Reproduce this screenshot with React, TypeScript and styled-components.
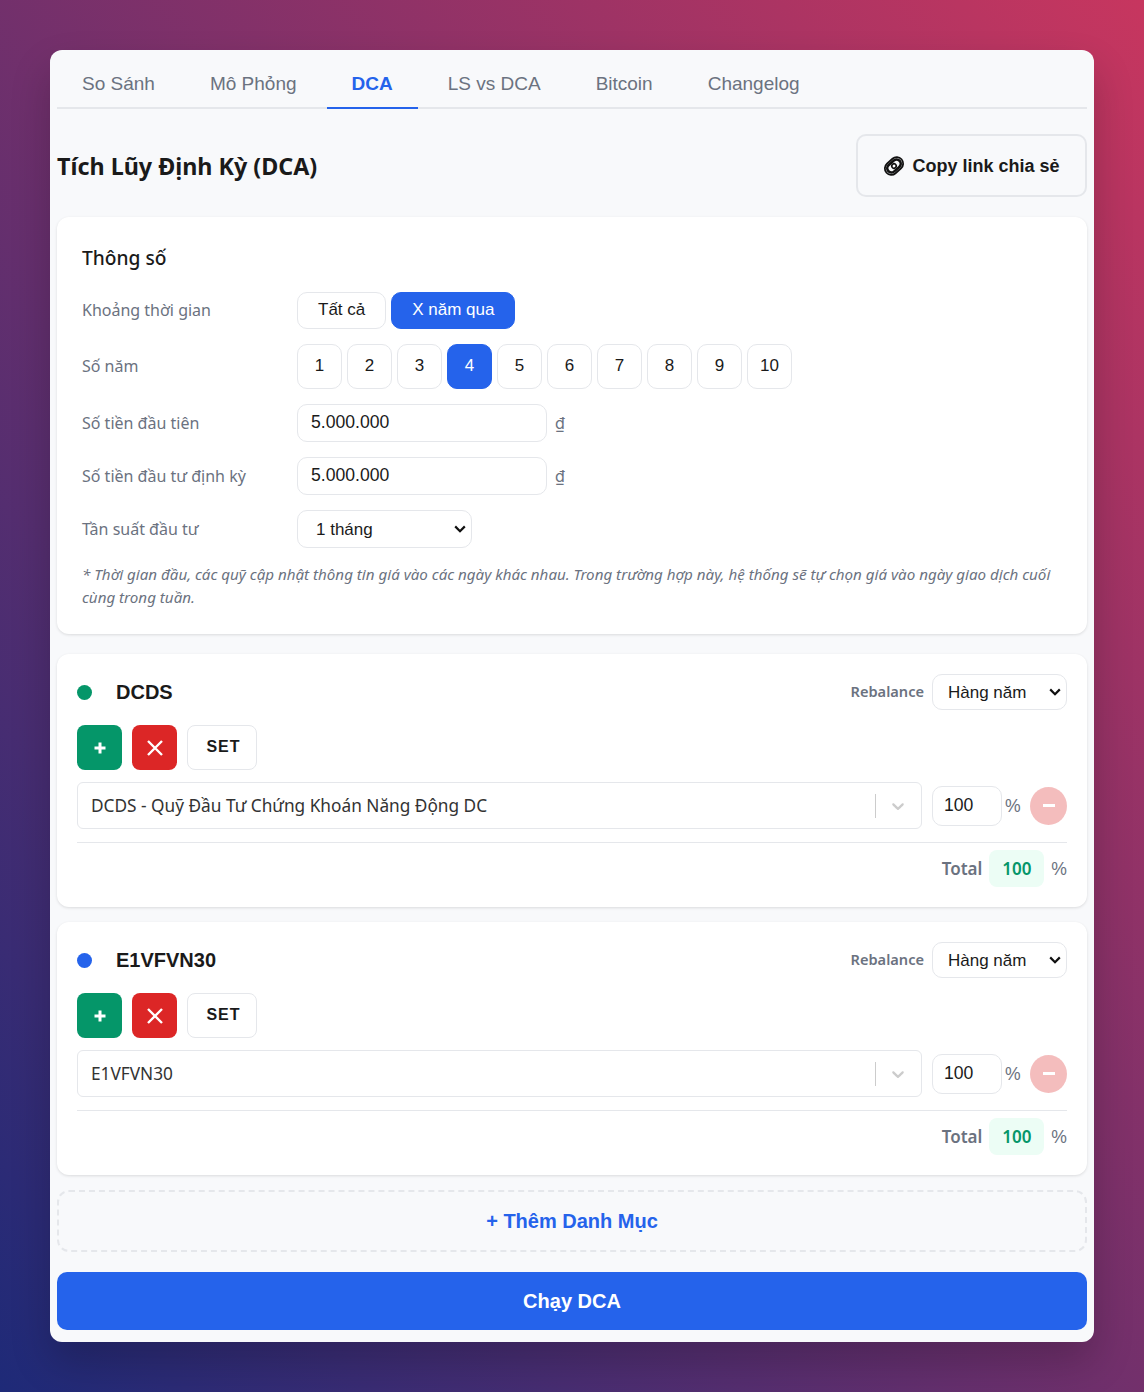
import React from "react";
import styled, { createGlobalStyle } from "styled-components";

const sans = `"Liberation Sans", Arial, sans-serif`;
const humanist = `"Noto Sans", "Open Sans", sans-serif`;

const selectArrow = `url("data:image/svg+xml,%3Csvg xmlns='http://www.w3.org/2000/svg' width='12' height='8' viewBox='0 0 12 8'%3E%3Cpath d='M1.2 1.4L6 6.2l4.8-4.8' fill='none' stroke='%23111' stroke-width='2.2'/%3E%3C/svg%3E")`;

const GlobalStyle = createGlobalStyle`
  html, body {
    margin: 0;
    padding: 0;
  }
  body {
    min-height: 1392px;
    font-family: ${sans};
    color: #1a1a1a;
    background: linear-gradient(to top right, #1e2a78 0%, #c7365f 100%);
  }
  * {
    box-sizing: border-box;
  }
`;

const Page = styled.div`
  padding: 50px;
`;

const Panel = styled.div`
  background: #f8f9fb;
  border-radius: 12px;
  padding: 0 7px 12px;
  height: 1292px;
  box-shadow: 0 20px 40px rgba(0, 0, 0, 0.2);
`;

const Tabs = styled.div`
  display: flex;
  gap: 5px;
  height: 59px;
  border-bottom: 2px solid #e5e7eb;
`;

const Tab = styled.div<{ $active?: boolean }>`
  padding: 0 25px;
  height: 59px;
  line-height: 67px;
  font-size: 19px;
  font-weight: ${(p) => (p.$active ? 700 : 400)};
  color: ${(p) => (p.$active ? "#2563eb" : "#6b7280")};
  border-bottom: 2px solid ${(p) => (p.$active ? "#2563eb" : "transparent")};
`;

const Header = styled.div`
  display: flex;
  align-items: center;
  justify-content: space-between;
  margin-top: 25px;
  height: 63px;
`;

const Title = styled.h2`
  margin: 0;
  font-family: ${humanist};
  font-size: 23.3px;
  font-weight: 700;
`;

const ShareButton = styled.button`
  display: flex;
  align-items: center;
  gap: 7px;
  justify-content: center;
  width: 231px;
  height: 63px;
  padding: 1px 0 0;
  background: transparent;
  border: 2px solid #e5e7eb;
  border-radius: 10px;
  font-family: ${sans};
  font-size: 18px;
  font-weight: 700;
  color: #1a1a1a;
`;

const Card = styled.section`
  background: #fff;
  border-radius: 12px;
  box-shadow: 0 1px 3px rgba(0, 0, 0, 0.12);
`;

const ParamCard = styled(Card)`
  margin-top: 20px;
  height: 417px;
  padding: 25px;
`;

const CardTitle = styled.h3`
  margin: 0;
  height: 50px;
  padding-top: 2px;
  font-family: ${humanist};
  font-size: 19.2px;
  line-height: 28px;
  font-weight: 500;
`;

const Rows = styled.div`
  display: flex;
  flex-direction: column;
  gap: 15px;
`;

const Row = styled.div`
  display: flex;
  align-items: center;
`;

const Label = styled.div`
  width: 215px;
  padding-bottom: 1px;
  font-family: ${humanist};
  font-size: 16px;
  color: #6b7280;
`;

const Options = styled.div`
  display: flex;
  gap: 5px;
`;

const Pill = styled.button<{ $active?: boolean; $square?: boolean }>`
  height: ${(p) => (p.$square ? 45 : 37)}px;
  width: ${(p) => (p.$square ? "45px" : "auto")};
  padding: ${(p) => (p.$square ? 0 : "0 20px")};
  padding-bottom: 2px;
  border: 1px solid ${(p) => (p.$active ? "#2563eb" : "#e5e7eb")};
  border-radius: 10px;
  background: ${(p) => (p.$active ? "#2563eb" : "#fff")};
  color: ${(p) => (p.$active ? "#fff" : "#1a1a1a")};
  font-family: ${sans};
  font-size: 17px;
`;

const Amount = styled.input`
  width: 250px;
  height: 38px;
  padding: 0 13px 2px;
  border: 1px solid #e5e7eb;
  border-radius: 10px;
  background: #fff;
  color: #1a1a1a;
  font-family: ${sans};
  font-size: 17.6px;
`;

const Unit = styled.span`
  margin-left: 8px;
  color: #6b7280;
  font-family: Inter, sans-serif;
  font-size: 16px;
`;

const Select = styled.select<{ $width: number; $height: number; $pad: number }>`
  appearance: none;
  width: ${(p) => p.$width}px;
  height: ${(p) => p.$height}px;
  padding: 0 20px 0 ${(p) => p.$pad}px;
  border: 1px solid #e5e7eb;
  border-radius: 10px;
  background: #fff ${selectArrow} no-repeat right 5px center;
  color: #1a1a1a;
  font-family: ${sans};
  font-size: 17px;
`;

const Note = styled.p`
  margin: 15px 0 0;
  font-family: ${humanist};
  font-size: 15.15px;
  line-height: 23px;
  font-style: italic;
  color: #6b7280;
`;

const PortfolioCard = styled(Card)<{ $first?: boolean }>`
  margin-top: ${(p) => (p.$first ? 20 : 15)}px;
  height: 253px;
  padding: 20px;
`;

const PortfolioHead = styled.div`
  display: flex;
  align-items: center;
  height: 36px;
`;

const Dot = styled.span<{ $color: string }>`
  width: 15px;
  height: 15px;
  border-radius: 50%;
  background: ${(p) => p.$color};
`;

const Name = styled.div`
  margin-left: 24px;
  flex: 1;
  font-size: 20px;
  font-weight: 700;
`;

const Rebalance = styled.span`
  margin-right: 8px;
  padding-bottom: 2px;
  font-family: ${humanist};
  font-size: 14.6px;
  font-weight: 600;
  color: #6b7280;
`;

const Actions = styled.div`
  display: flex;
  gap: 10px;
  margin-top: 15px;
`;

const ActionButton = styled.button<{ $bg: string }>`
  display: flex;
  align-items: center;
  justify-content: center;
  width: 45px;
  height: 45px;
  padding: 0;
  border: none;
  border-radius: 8px;
  background: ${(p) => p.$bg};
  color: #fff;
`;

const SetButton = styled.button`
  width: 70px;
  height: 45px;
  padding: 0 0 2px 3px;
  border: 1px solid #e5e7eb;
  border-radius: 8px;
  background: #fff;
  color: #1a1a1a;
  font-family: ${sans};
  font-size: 16px;
  font-weight: 700;
  letter-spacing: 1px;
`;

const AssetRow = styled.div`
  display: flex;
  align-items: center;
  margin-top: 12px;
  height: 47px;
`;

const AssetSelect = styled.div`
  display: flex;
  align-items: center;
  width: 845px;
  height: 47px;
  padding-left: 13px;
  border: 1px solid #e5e7eb;
  border-radius: 6px;
  font-family: ${humanist};
  font-size: 17.25px;
  color: #333;
`;

const AssetName = styled.div`
  flex: 1;
`;

const Separator = styled.span`
  width: 1px;
  height: 24px;
  background: #ccc;
`;

const Chevron = styled.svg`
  width: 20px;
  height: 20px;
  margin: 0 13px 0 12px;
  fill: #ccc;
`;

const Weight = styled.input`
  width: 70px;
  height: 40px;
  margin-left: 10px;
  padding: 0 11px;
  border: 1px solid #e5e7eb;
  border-radius: 10px;
  background: #fff;
  color: #1a1a1a;
  font-family: ${sans};
  font-size: 17.6px;
`;

const Percent = styled.span`
  margin: 2px 0 0 3px;
  width: 25px;
  color: #6b7280;
  font-size: 17.6px;
`;

const RemoveButton = styled.button`
  display: flex;
  align-items: center;
  justify-content: center;
  width: 37px;
  height: 38px;
  padding: 0;
  border: none;
  border-radius: 50%;
  background: rgba(220, 38, 38, 0.3);
`;

const Bar = styled.span`
  width: 12px;
  height: 3px;
  background: #fff;
`;

const TotalRow = styled.div`
  display: flex;
  align-items: center;
  justify-content: flex-end;
  margin-top: 13px;
  padding-top: 7px;
  border-top: 1px solid #e5e7eb;
  font-size: 17.6px;
  color: #6b7280;
`;

const TotalLabel = styled.span`
  font-family: ${humanist};
  font-size: 17px;
  font-weight: 600;
`;

const TotalBadge = styled.span`
  width: 55px;
  height: 37px;
  margin: 0 7px;
  border-radius: 8px;
  background: #ecfdf5;
  color: #059669;
  font-family: ${humanist};
  font-size: 17px;
  font-weight: 600;
  line-height: 37px;
  text-align: center;
`;

const TotalUnit = styled.span`
  margin-top: 2px;
`;

const AddButton = styled.button`
  display: block;
  width: 100%;
  height: 62px;
  margin-top: 15px;
  border: 2px dashed #e5e7eb;
  border-radius: 12px;
  background: transparent;
  color: #2563eb;
  font-family: ${sans};
  font-size: 20px;
  font-weight: 700;
`;

const RunButton = styled.button`
  display: block;
  width: 100%;
  height: 58px;
  margin-top: 20px;
  border: none;
  border-radius: 10px;
  background: #2563eb;
  color: #fff;
  font-family: ${sans};
  font-size: 20px;
  font-weight: 700;
`;

const tabs = ["So Sánh", "Mô Phỏng", "DCA", "LS vs DCA", "Bitcoin", "Changelog"];
const years = [1, 2, 3, 4, 5, 6, 7, 8, 9, 10];

const LinkIcon = () => (
  <svg width="22" height="22" viewBox="0 0 22 22">
    <g transform="rotate(-42 11 11)" fill="none" stroke="#111">
      <rect x="0.9" y="4.6" width="20.2" height="12.8" rx="6.4" strokeWidth="1.8" />
      <rect x="3.4" y="6.8" width="15.2" height="8.4" rx="4.2" strokeWidth="2.6" />
      <circle cx="11" cy="11" r="2.2" fill="#fff" strokeWidth="1.6" />
    </g>
  </svg>
);

type PortfolioProps = { name: string; color: string; asset: string; first?: boolean };

const Portfolio = ({ name, color, asset, first }: PortfolioProps) => (
  <PortfolioCard $first={first}>
    <PortfolioHead>
      <Dot $color={color} />
      <Name>{name}</Name>
      <Rebalance>Rebalance</Rebalance>
      <Select $width={135} $height={36} $pad={15} defaultValue="year">
        <option value="year">Hàng năm</option>
      </Select>
    </PortfolioHead>
    <Actions>
      <ActionButton $bg="#059669">
        <svg width="14" height="14" viewBox="0 0 14 14">
          <path d="M7 1.5v11M1.5 7h11" stroke="#fff" strokeWidth="3" />
        </svg>
      </ActionButton>
      <ActionButton $bg="#dc2626">
        <svg width="18" height="18" viewBox="0 0 18 18">
          <path d="M2 2l14 14M16 2L2 16" stroke="#fff" strokeWidth="2.4" />
        </svg>
      </ActionButton>
      <SetButton>SET</SetButton>
    </Actions>
    <AssetRow>
      <AssetSelect>
        <AssetName>{asset}</AssetName>
        <Separator />
        <Chevron viewBox="0 0 20 20">
          <path d="M4.516 7.548c0.436-0.446 1.043-0.481 1.576 0l3.908 3.747 3.908-3.747c0.533-0.481 1.141-0.446 1.574 0 0.436 0.445 0.408 1.197 0 1.615-0.406 0.418-4.695 4.502-4.695 4.502-0.217 0.223-0.502 0.335-0.787 0.335s-0.57-0.112-0.789-0.335c0 0-4.287-4.084-4.695-4.502s-0.436-1.17 0-1.615z" />
        </Chevron>
      </AssetSelect>
      <Weight defaultValue="100" />
      <Percent>%</Percent>
      <RemoveButton>
        <Bar />
      </RemoveButton>
    </AssetRow>
    <TotalRow>
      <TotalLabel>Total</TotalLabel>
      <TotalBadge>100</TotalBadge>
      <TotalUnit>%</TotalUnit>
    </TotalRow>
  </PortfolioCard>
);

export default function App() {
  return (
    <Page>
      <GlobalStyle />
      <Panel>
        <Tabs>
          {tabs.map((t) => (
            <Tab key={t} $active={t === "DCA"}>
              {t}
            </Tab>
          ))}
        </Tabs>
        <Header>
          <Title>Tích Lũy Định Kỳ (DCA)</Title>
          <ShareButton>
            <LinkIcon />
            Copy link chia sẻ
          </ShareButton>
        </Header>
        <ParamCard>
          <CardTitle>Thông số</CardTitle>
          <Rows>
            <Row>
              <Label>Khoảng thời gian</Label>
              <Options>
                <Pill>Tất cả</Pill>
                <Pill $active>X năm qua</Pill>
              </Options>
            </Row>
            <Row>
              <Label>Số năm</Label>
              <Options>
                {years.map((y) => (
                  <Pill key={y} $square $active={y === 4}>
                    {y}
                  </Pill>
                ))}
              </Options>
            </Row>
            <Row>
              <Label>Số tiền đầu tiên</Label>
              <Amount defaultValue="5.000.000" />
              <Unit>₫</Unit>
            </Row>
            <Row>
              <Label>Số tiền đầu tư định kỳ</Label>
              <Amount defaultValue="5.000.000" />
              <Unit>₫</Unit>
            </Row>
            <Row>
              <Label>Tần suất đầu tư</Label>
              <Select $width={175} $height={38} $pad={18} defaultValue="1">
                <option value="1">1 tháng</option>
              </Select>
            </Row>
          </Rows>
          <Note>
            * Thời gian đầu, các quỹ cập nhật thông tin giá vào các ngày khác nhau. Trong trường hợp này, hệ thống sẽ
            tự chọn giá vào ngày giao dịch cuối cùng trong tuần.
          </Note>
        </ParamCard>
        <Portfolio first name="DCDS" color="#059669" asset="DCDS - Quỹ Đầu Tư Chứng Khoán Năng Động DC" />
        <Portfolio name="E1VFVN30" color="#2563eb" asset="E1VFVN30" />
        <AddButton>+ Thêm Danh Mục</AddButton>
        <RunButton>Chạy DCA</RunButton>
      </Panel>
    </Page>
  );
}
